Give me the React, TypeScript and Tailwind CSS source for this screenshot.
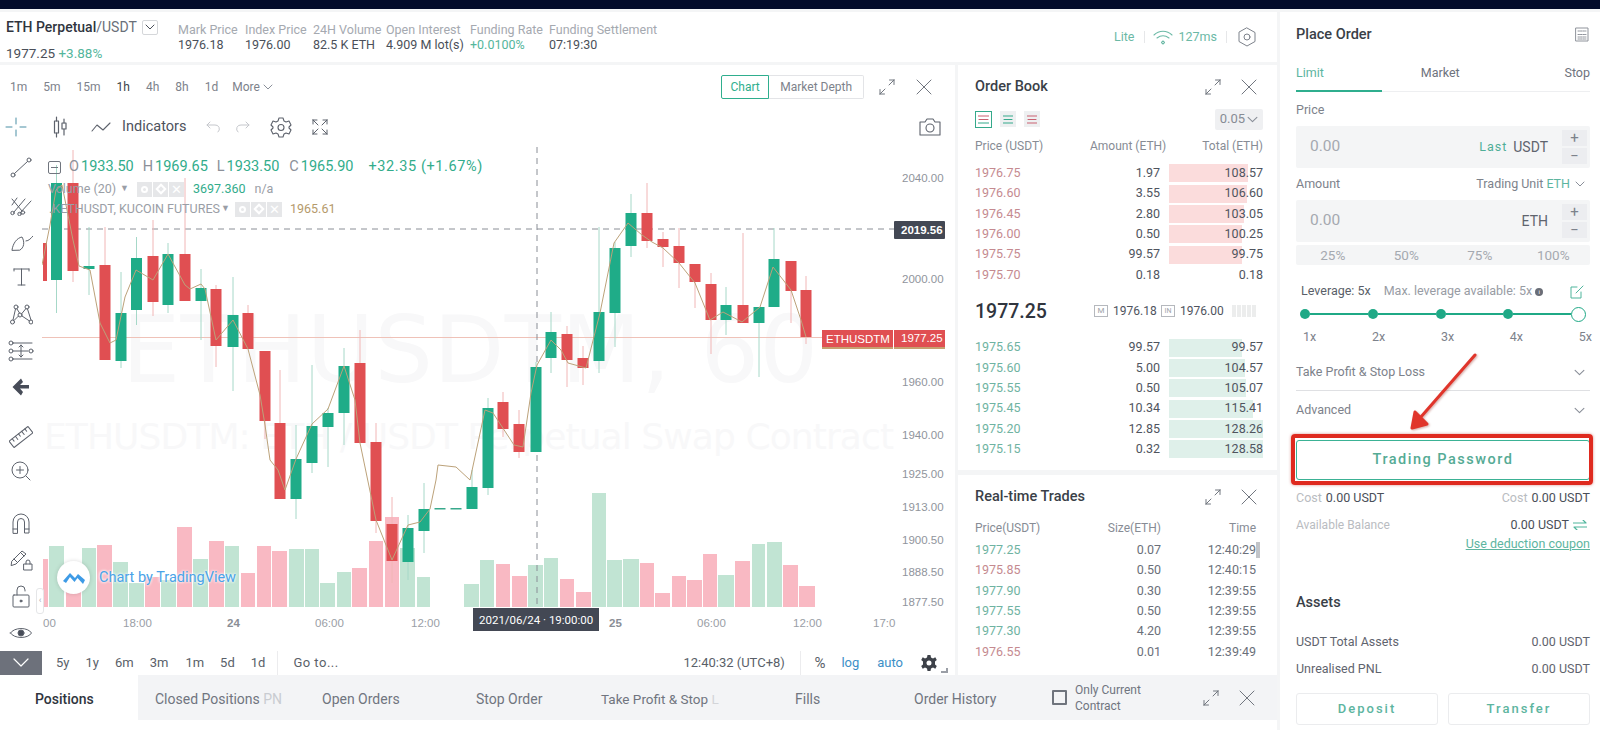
import React from "react";

type C = [number, number, number, number, number, "g" | "r"];
const candles: C[] = [
  [45, 243, 281, 243, 281, "r"], [56.5, 183, 280, 165, 313, "g"], [73, 183, 271, 150, 282, "r"], [89, 266, 269, 227, 295, "g"],
  [105, 265, 360, 227, 360, "r"], [121, 313, 361, 272, 368, "g"], [136.5, 258, 310, 237, 325, "g"], [153, 256, 302, 220, 316, "r"],
  [168, 254, 305, 243, 313, "g"], [185, 254, 301, 178, 301, "r"], [201, 288, 301, 269, 340, "g"], [216, 289, 346, 285, 367, "r"],
  [233, 315, 347, 277, 391, "g"], [248, 313, 349, 305, 349, "r"], [265, 351, 421, 351, 439, "r"], [280, 423, 499, 370, 499, "r"],
  [296, 459, 499, 425, 519, "g"], [312, 426, 463, 365, 473, "g"], [328, 413, 427, 408, 467, "g"], [344, 366, 413, 348, 445, "g"],
  [360, 363, 443, 330, 443, "r"], [376, 442, 521, 423, 533, "r"], [392, 524, 561, 497, 583, "r"], [408, 528, 562, 515, 580, "g"],
  [424, 509, 531, 483, 553, "g"], [472, 487, 509, 470, 509, "g"], [488, 408, 488, 398, 495, "g"], [503, 402, 429, 392, 437, "r"],
  [519, 424, 452, 410, 458, "r"], [536, 367, 452, 362, 452, "g"], [551, 332, 358, 312, 373, "g"], [567, 334, 360, 326, 387, "r"],
  [583, 358, 368, 346, 385, "r"], [599, 312, 361, 227, 373, "g"], [615, 248, 313, 242, 347, "g"], [631, 213, 246, 194, 257, "g"],
  [647, 213, 241, 183, 248, "r"], [663, 239, 247, 232, 267, "r"], [679, 246, 263, 228, 288, "r"], [695, 264, 282, 264, 308, "r"],
  [711, 284, 320, 273, 354, "r"], [726, 305, 320, 287, 335, "g"], [743, 305, 323, 233, 323, "r"], [759, 307, 323, 307, 377, "g"],
  [774, 259, 307, 228, 307, "g"], [791, 261, 291, 261, 323, "r"], [806, 290, 337, 276, 344, "r"],
];
const flat: number[] = [440, 456];
type V = [number, number, number, "g" | "r"];
const vols: V[] = [
  [43, 48, 559, "r"], [49, 64, 546, "g"], [66, 81, 570, "r"], [82, 96, 548, "g"], [97, 112, 545, "r"], [113, 128, 562, "g"], [129, 144, 583, "g"], [145, 160, 577, "r"],
  [161, 176, 580, "g"], [177, 192, 527, "r"], [193, 208, 559, "g"], [209, 224, 541, "r"], [225, 239, 546, "g"], [241, 255, 573, "r"], [257, 271, 546, "r"], [272, 287, 551, "r"],
  [289, 304, 549, "g"], [305, 319, 549, "g"], [320, 335, 583, "g"], [337, 351, 572, "g"], [352, 367, 568, "r"], [369, 383, 541, "r"], [385, 399, 517, "r"], [400, 415, 548, "g"],
  [417, 430, 577, "g"], [464, 479, 584, "g"], [480, 494, 560, "g"], [496, 510, 564, "r"], [512, 527, 576, "r"], [528, 543, 565, "g"], [544, 558, 558, "g"], [560, 574, 579, "r"],
  [576, 591, 592, "r"], [592, 606, 493, "g"], [607, 622, 560, "g"], [623, 639, 559, "g"], [640, 654, 563, "r"], [655, 670, 593, "r"], [672, 686, 576, "r"], [687, 702, 580, "r"],
  [703, 717, 554, "r"], [718, 734, 575, "g"], [735, 750, 561, "r"], [752, 765, 544, "g"], [767, 782, 542, "g"], [783, 798, 565, "r"], [799, 815, 586, "r"],
];
const line =
  "42,265 50,225 56,190 62,185 73,240 79,266 90,270 100,323 110,343 116,340 125,297 136,270 153,280 168,254 185,285 190,289 201,284 205,289 216,340 233,320 248,349 260,395 265,425 270,460 278,470 285,490 296,459 312,424 328,409 344,366 355,400 360,443 376,520 392,560 408,525 420,522 430,509 436,480 438,465 456,467 470,480 485,410 493,413 514,445 523,447 531,393 537,365 551,340 561,350 568,363 586,368 600,313 614,243 628,223 642,235 652,242 663,248 679,263 695,283 710,320 723,312 742,322 760,307 773,267 791,290 801,320 806,337";

const asks = [["1976.75", "1.97", "108.57"], ["1976.60", "3.55", "106.60"], ["1976.45", "2.80", "103.05"], ["1976.00", "0.50", "100.25"], ["1975.75", "99.57", "99.75"], ["1975.70", "0.18", "0.18"]];
const bids = [["1975.65", "99.57", "99.57"], ["1975.60", "5.00", "104.57"], ["1975.55", "0.50", "105.07"], ["1975.45", "10.34", "115.41"], ["1975.20", "12.85", "128.26"], ["1975.15", "0.32", "128.58"]];
const trades: [string, string, string, boolean][] = [
  ["1977.25", "0.07", "12:40:29", true], ["1975.85", "0.50", "12:40:15", false], ["1977.90", "0.30", "12:39:55", true],
  ["1977.55", "0.50", "12:39:55", true], ["1977.30", "4.20", "12:39:55", true], ["1976.55", "0.01", "12:39:49", false],
];

const S = ({ w = 24, h = 24, vb, children, c = "#5d626c", sw = 1 }: { w?: number; h?: number; vb?: string; children: React.ReactNode; c?: string; sw?: number }) => (
  <svg width={w} height={h} viewBox={vb ?? `0 0 ${w} ${h}`} fill="none" stroke={c} strokeWidth={sw} strokeLinecap="round" strokeLinejoin="round">
    {children}
  </svg>
);
const Expand = ({ c = "#71767f" }: { c?: string }) => (
  <S w={18} h={18} c={c} sw={1}>
    <path d="M2 16 7 11M2 16V11.5M2 16H6.5M16 2 11 7M16 2V6.5M16 2H11.5" />
  </S>
);
const Close = () => (
  <S w={16} h={16} c="#71767f" sw={1}>
    <path d="M1 1 15 15M15 1 1 15" />
  </S>
);
const Chev = ({ c = "#8a8f99", s = 10 }: { c?: string; s?: number }) => (
  <S w={s} h={s} vb="0 0 10 10" c={c} sw={1}>
    <path d="M1 3 5 7 9 3" />
  </S>
);
const GearBox = () => (
  <span className="flex items-center gap-[1px]">
    <span className="flex h-[15px] w-[15px] items-center justify-center bg-[#e6e7e9]"><span className="h-[7px] w-[7px] rounded-full border-2 border-white" /></span>
    <span className="flex h-[15px] w-[15px] items-center justify-center bg-[#e6e7e9]"><span className="h-[8px] w-[8px] rotate-45 border-2 border-white" /></span>
    <span className="flex h-[15px] w-[15px] items-center justify-center bg-[#e6e7e9] text-[13px] leading-none text-white">✕</span>
  </span>
);

const tools: React.ReactNode[] = [
  <S key="a"><circle cx="20" cy="5" r="2" /><circle cx="4" cy="20" r="2" /><path d="M5.500 18.500 18.500 6.500" /></S>,
  <S key="b"><path d="M3 7 13 19" /><path d="M5 20 16 7M3 13 8 6M11 21 22 9" /><circle cx="3.500" cy="21" r="1.700" /><circle cx="10.500" cy="22" r="1.700" /><circle cx="14" cy="20.500" r="1.700" /></S>,
  <S key="c"><path d="M3 21C4 14 8 9 13 8 16 13 15 19 11 21Z" /><path d="M17 12C20 12 22 9 24 7" /></S>,
  <S key="d"><path d="M5 4H20M12.500 4V20M9 20H16M5 4V6M20 4V6" /></S>,
  <S key="e"><circle cx="7" cy="5" r="2" /><circle cx="18" cy="5" r="2" /><circle cx="3.500" cy="20" r="2" /><circle cx="11" cy="13" r="2" /><circle cx="22" cy="20" r="2" /><path d="M6.500 7 4 18M8 7 10.500 11M12.500 12 17 6.500M18.500 7 22 18M13 14 20.500 19M9.500 14 5 18.500" /></S>,
  <S key="f" w={26} h={24}><path d="M5 4H24M5 20H24M6 12H20" /><circle cx="3" cy="4" r="2" /><circle cx="3" cy="12" r="2" /><circle cx="3" cy="20" r="2" /><circle cx="23" cy="12" r="2" /><path d="M13 6V18M11 8 13 6 15 8M11 16 13 18 15 16" /></S>,
  <svg key="g" width="20" height="20" viewBox="0 0 20 20" fill="#474c58"><path d="M10 1.500 1.500 10 10 18.500 12 15 9 11.500H18V8H9L12 5Z" /></svg>,
];
const tools2: React.ReactNode[] = [
  <S key="a"><g transform="rotate(-38 12 12)"><rect x="0" y="8" width="24" height="8" rx="0.500" /><path d="M4 8V11M8 8V12M12 8V11M16 8V12M20 8V11" /></g></S>,
  <S key="b"><circle cx="11" cy="11" r="8" /><path d="M11 7.500V14.500M7.500 11H14.500M17 17 21 21" /></S>,
];
const tools3: React.ReactNode[] = [
  <S key="a"><path d="M4 22V11A8 8 0 0 1 20 11V22H15.500V11A3.500 3.500 0 0 0 8.500 11V22ZM4 18H8.500M15.500 18H20" /></S>,
  <S key="b"><path d="M3 14 13 4 17 7 7 17 2.500 18.500ZM12 6 15 9M5 12 8 15" /><rect x="15" y="17" width="8" height="6" /><path d="M17 17V15A2 2 0 0 1 21 15V17" /></S>,
  <S key="c"><rect x="4" y="11" width="16" height="12" rx="1" /><path d="M8 11V6A4 4 0 0 1 16 6V7" /><circle cx="12" cy="17" r="1" fill="#5d626c" /></S>,
  <S key="d"><path d="M1.500 12C5 6 19 6 22.500 12 19 18 5 18 1.500 12Z" /><circle cx="12" cy="12" r="3" fill="#474c58" /></S>,
];

function Chart() {
  return (
    <div className="relative h-[507px] w-[913px]">
      <svg className="block" width="913" height="507" viewBox="42 144 913 507" fontFamily="'Liberation Sans',sans-serif">
        <text x="122" y="382" fontSize="92" fill="#f8f8f9" fontFamily="'DejaVu Sans',sans-serif" textLength="696">ETHUSDTM, 60</text>
        <text x="44" y="449" fontSize="36" fill="#f8f8f9" fontFamily="'DejaVu Sans',sans-serif" textLength="850">ETHUSDTM: ETH / USDT Perpetual Swap Contract</text>
        {vols.map((v, i) => (
          <rect key={i} x={v[0]} y={v[2]} width={v[1] - v[0]} height={607 - v[2]} fill={v[3] === "g" ? "#c1e4d3" : "#f9b9c3"} />
        ))}
        <line x1="42" x2="894" y1="229" y2="229" stroke="#8a8e96" strokeDasharray="6 5" />
        <line x1="42" x2="822" y1="337.500" y2="337.500" stroke="#efc2b8" />
        <line x1="537" x2="537" y1="147" y2="608" stroke="#8a8e96" strokeDasharray="6 5" />
        {candles.map((c, i) => {
          const up = c[5] === "g";
          return (
            <g key={i}>
              <line x1={c[0]} x2={c[0]} y1={c[3]} y2={c[4]} stroke={up ? "#a6d8c8" : "#f1b6b6"} />
              <rect x={i === 0 ? 43 : c[0] - 5.5} y={c[1]} width={i === 0 ? 4 : 11} height={c[2] - c[1]} fill={up ? "#1fac88" : "#e04f52"} />
            </g>
          );
        })}
        {flat.map((x) => (
          <rect key={x} x={x - 5.5} y="508" width="11" height="1.500" fill="#38a98c" />
        ))}
        <polyline points={line} fill="none" stroke="#bca27a" strokeWidth="1" />
        <rect x="822" y="330" width="71" height="19" fill="#e04f52" />
        <rect x="822" y="347" width="71" height="2" fill="#c7a070" />
        <rect x="894" y="330" width="51" height="19" fill="#e04f52" />
        <rect x="894" y="347" width="51" height="2" fill="#c7a070" />
        <text x="826" y="343" fontSize="11.500" fill="#fff">ETHUSDTM</text>
        <text x="901" y="342" fontSize="11.500" fill="#fff">1977.25</text>
        <rect x="894" y="221" width="51" height="18" fill="#434854" rx="1" />
        <text x="901" y="234" fontSize="11.500" fill="#fff" fontWeight="700">2019.56</text>
        {[["2040.00", 182], ["2000.00", 283], ["1960.00", 386], ["1940.00", 439], ["1925.00", 478], ["1913.00", 511], ["1900.50", 544], ["1888.50", 576], ["1877.50", 606]].map(([t, y]) => (
          <text key={String(t)} x="902" y={Number(y)} fontSize="11.500" fill="#90949c">{t}</text>
        ))}
        {[["00", 43], ["18:00", 123], ["06:00", 315], ["12:00", 411], ["06:00", 697], ["12:00", 793], ["17:0", 873]].map(([t, x], i) => (
          <text key={i} x={Number(x)} y="627" fontSize="11.500" fill="#9a9ea6">{t}</text>
        ))}
        <text x="227" y="627" fontSize="11.500" fill="#8a8e96" fontWeight="700">24</text>
        <text x="609" y="627" fontSize="11.500" fill="#8a8e96" fontWeight="700">25</text>
        <rect x="473" y="608" width="126" height="23" fill="#434854" />
        <text x="479" y="624" fontSize="11.500" fill="#fff" fontFamily="Roboto,sans-serif">2021/06/24 · 19:00:00</text>
      </svg>

      <div className="absolute left-[6px] top-[15px] flex h-[16px] items-center text-[14.500px] text-[#32ac8b]">
        <span className="mr-[8px] flex h-[13px] w-[13px] items-center justify-center rounded-[2px] border border-[#70757e]"><span className="h-px w-[7px] bg-[#70757e]" /></span>
        <span className="text-[#8c9099]">O</span><span className="ml-[2px]">1933.50</span>
        <span className="ml-[9px] text-[#8c9099]">H</span><span className="ml-[2px]">1969.65</span>
        <span className="ml-[9px] text-[#8c9099]">L</span><span className="ml-[2px]">1933.50</span>
        <span className="ml-[10px] text-[#8c9099]">C</span><span className="ml-[2px]">1965.90</span>
        <span className="ml-[15px] tracking-[0.6px]">+32.35 (+1.67%)</span>
      </div>
      <div className="absolute left-[6px] top-[37px] flex h-[16px] items-center text-[12.500px] text-[#9a9ea6]">
        <span className="w-[72px]">Volume (20)</span>
        <span className="w-[17px] text-[9px]">▼</span>
        <GearBox />
        <span className="ml-[9px] text-[#32ac8b]">3697.360</span>
        <span className="ml-[9px]">n/a</span>
      </div>
      <div className="absolute left-[7px] top-[57px] flex h-[16px] items-center text-[12.500px] text-[#9a9ea6]">
        <span className="w-[172px] whitespace-nowrap">.KETHUSDT, KUCOIN FUTURES</span>
        <span className="w-[14px] text-[9px]">▼</span>
        <GearBox />
        <span className="ml-[8px] text-[#b59a6b]">1965.61</span>
      </div>
      <div className="absolute left-[15px] top-[417px] flex items-center">
        <span className="flex h-[33px] w-[33px] items-center justify-center rounded-full bg-white shadow-[0_0_4px_rgba(0,0,0,0.15)]">
          <svg width="24" height="14" viewBox="0 0 24 14" fill="#3e9be6"><path d="M1 10 8 2 13 7 16 3 23 9 21 13 15.500 7 12.500 11 8 6 4 12Z" /></svg>
        </span>
        <span className="ml-[9px] text-[14.500px] text-[#4aa3e8] [text-shadow:0_0_3px_#fff,0_0_3px_#fff]">Chart by TradingView</span>
      </div>
      <span className="absolute left-[-6px] top-[444px] flex h-[26px] w-[8px] items-center justify-center rounded-[3px] border border-[#e5e6e8] bg-white text-[9px] text-[#a8acb3]">‹</span>
    </div>
  );
}

function ChartPanel() {
  return (
    <div className="flex w-[955px] flex-col bg-white">
      <div className="flex h-[43px] items-center whitespace-nowrap text-[12px] text-[#7d828b]">
        <span className="ml-[10px] mt-[1px]">1m</span>
        <span className="ml-[16px] mt-[1px]">5m</span>
        <span className="ml-[16px] mt-[1px]">15m</span>
        <span className="ml-[16px] mt-[1px] text-[#3a3f48]">1h</span>
        <span className="ml-[16px] mt-[1px]">4h</span>
        <span className="ml-[16px] mt-[1px]">8h</span>
        <span className="ml-[16px] mt-[1px]">1d</span>
        <span className="ml-[14px] mt-[1px] flex w-[44px] items-center gap-[3px]">More <Chev /></span>
        <div className="ml-[445px] flex h-[24px] items-center">
          <span className="flex h-full w-[48px] items-center justify-center rounded-l-[2px] border border-[#2fae8e] text-[#2fae8e]">Chart</span>
          <span className="flex h-full w-[95px] items-center justify-center rounded-r-[2px] border border-l-0 border-[#e3e4e7]">Market Depth</span>
        </div>
        <span className="ml-[14px]"><Expand /></span>
        <span className="ml-[20px]"><Close /></span>
      </div>
      <div className="flex h-[36px] items-center pt-[2px]">
        <span className="ml-[4px] w-[24px]">
          <S c="#4b8fa5"><path d="M12 3V9M12 15V21M2 12H8M16 12H22" /></S>
        </span>
        <span className="ml-[25px]">
          <S w={16} h={22} sw={1.2}><rect x="1.500" y="5" width="4" height="12" /><path d="M3.500 1V5M3.500 17V21M11 3V7M11 13V19" /><rect x="9" y="7" width="4" height="6" /></S>
        </span>
        <span className="ml-[22px]"><S w={20} h={14} sw={1.1}><path d="M1 11 6 5 12 10 19 3" /></S></span>
        <span className="ml-[11px] w-[64px] whitespace-nowrap text-[14.500px] text-[#4d525c]">Indicators</span>
        <span className="ml-[20px]"><S w={14} h={14} c="#c5c7cc"><path d="M4 2 1 5 4 8M1 5H9A4 4 0 0 1 12 12" /></S></span>
        <span className="ml-[16px]"><S w={14} h={14} c="#c5c7cc"><path d="M10 2 13 5 10 8M13 5H5A4 4 0 0 0 2 12" /></S></span>
        <span className="ml-[20px]">
          <S w={22} h={22} sw={1.1}><path d="M9 2H13L14 5 16 6 19 5 21 9 19 11V12L21 14 19 18 16 17 14 18 13 21H9L8 18 6 17 3 18 1 14 3 12V11L1 9 3 5 6 6 8 5Z" /><circle cx="11" cy="11.500" r="3" /></S>
        </span>
        <span className="ml-[19px]">
          <S w={18} h={18} sw={1}><path d="M7 7 2 2M2 2V6M2 2H6M11 7 16 2M16 2V6M16 2H12M7 11 2 16M2 16V12M2 16H6M11 11 16 16M16 16V12M16 16H12" /></S>
        </span>
        <span className="ml-[590px]">
          <S w={22} h={20} sw={1.1}><path d="M1 5H6L8 2H14L16 5H21V18H1Z" /><circle cx="11" cy="11" r="4" /></S>
        </span>
      </div>
      <div className="flex h-[507px]">
        <div className="flex w-[42px] flex-col items-center pt-[5px]">
          {tools.map((t, i) => (
            <span key={i} className="flex h-[37px] items-center">{t}</span>
          ))}
          <span className="h-[14px]" />
          {tools2.map((t, i) => (
            <span key={i} className="flex h-[35px] items-center">{t}</span>
          ))}
          <span className="h-[16px]" />
          {tools3.map((t, i) => (
            <span key={i} className="flex h-[37px] items-center">{t}</span>
          ))}
        </div>
        <Chart />
      </div>
      <div className="flex h-[24px] items-center whitespace-nowrap text-[13px] text-[#5a5f69]">
        <span className="flex h-full w-[42px] items-center justify-center bg-[#6d717b]">
          <S w={18} h={10} c="#fff" sw={1.2}><path d="M2 1 9 8 16 1" /></S>
        </span>
        <span className="ml-[14px]">5y</span>
        <span className="ml-[16px]">1y</span>
        <span className="ml-[16px]">6m</span>
        <span className="ml-[16px]">3m</span>
        <span className="ml-[17px]">1m</span>
        <span className="ml-[16px]">5d</span>
        <span className="ml-[16px]">1d</span>
        <span className="ml-[12px] h-[24px] w-px bg-[#ececee]" />
        <span className="ml-[15px] w-[46px] tracking-[0.5px]">Go to...</span>
        <span className="ml-[344px] w-[104px]">12:40:32 (UTC+8)</span>
        <span className="ml-[13px] h-[24px] w-px bg-[#ececee]" />
        <span className="ml-[13px] text-[15px]">%</span>
        <span className="ml-[16px] text-[#3d8fc7]">log</span>
        <span className="ml-[18px] text-[#3d8fc7]">auto</span>
        <span className="ml-[18px]">
          <svg width="16" height="16" viewBox="0 0 16 16" fill="#3d4149"><path d="M6.500 0H9.500L10 2.500 12 3.500 14.300 2.300 15.800 5 14 6.600V9.400L15.800 11 14.300 13.700 12 12.500 10 13.500 9.500 16H6.500L6 13.500 4 12.500 1.700 13.700.2 11 2 9.400V6.600L.2 5 1.700 2.300 4 3.500 6 2.500ZM8 5.500A2.500 2.500 0 1 0 8 10.500 2.500 2.500 0 0 0 8 5.500Z" /></svg>
        </span>
        <span className="ml-[4px] mt-[14px] h-[5px] w-[7px] border-b-2 border-r-2 border-[#9a9ea6]" />
      </div>
    </div>
  );
}

function OrderBook() {
  const Row = ({ r, red }: { r: string[]; red: boolean }) => (
    <div className="flex h-[20.400px] items-center text-[12.500px]">
      <span className={`w-[115px] ${red ? "text-[#c58a90]" : "text-[#6fb3a2]"}`}>{r[0]}</span>
      <span className="w-[70px] text-right text-[#4f545e]">{r[1]}</span>
      <span className="relative ml-[9px] flex h-[18px] w-[94px] items-center justify-end text-[#4f545e]">
        {Number(r[2]) > 1 && (
          <span className={`absolute left-0 top-0 h-full ${red ? "bg-[#fbdcdc]" : "bg-[#dff0ea]"}`} style={{ width: (Number(r[2]) / 128.58) * 94 }} />
        )}
        <span className="relative">{r[2]}</span>
      </span>
    </div>
  );
  return (
    <div className="h-[405px] bg-white pl-[17px] pr-[14px]">
      <div className="flex h-[42px] items-center pt-[1px]">
        <span className="text-[14.500px] font-medium text-[#3a3f48]">Order Book</span>
        <span className="ml-auto"><Expand /></span>
        <span className="ml-[19px] mr-[6px]"><Close /></span>
      </div>
      <div className="flex h-[24px] items-center">
        <span className="flex h-[17px] w-[17px] items-center justify-center border border-[#35a98b]"><S w={11} h={9} c="#c96070" sw={1}><path d="M0 1H11M1 4.500H10" /><path d="M0 8H11" stroke="#35a98b" /></S></span>
        <span className="ml-[8px] flex h-[16px] w-[16px] items-center justify-center bg-[#eef0f1]"><S w={10} h={9} c="#35a98b" sw={1}><path d="M0 1H10M1 4.500H9M0 8H10" /></S></span>
        <span className="ml-[8px] flex h-[16px] w-[16px] items-center justify-center bg-[#eef0f1]"><S w={10} h={9} c="#c96070" sw={1}><path d="M0 1H10M1 4.500H9M0 8H10" /></S></span>
        <span className="ml-auto flex h-[21px] w-[48px] items-center justify-center gap-[2px] rounded-[2px] bg-[#eff0f2] text-[13px] text-[#878c95]">0.05 <Chev s={11} /></span>
      </div>
      <div className="flex h-[30px] items-center whitespace-nowrap text-[12px] text-[#878c95]">
        <span className="w-[115px]">Price (USDT)</span>
        <span className="w-[75px] text-right">Amount (ETH)</span>
        <span className="ml-[4px] w-[94px] text-right">Total (ETH)</span>
      </div>
      <div className="mt-[2px]">
        {asks.map((r) => <Row key={r[0]} r={r} red />)}
      </div>
      <div className="flex h-[52px] items-center">
        <span className="w-[119px] text-[19.500px] font-medium text-[#30353e]">1977.25</span>
        <span className="flex h-[12px] w-[14px] items-center justify-center border border-[#b5b8bd] text-[8px] text-[#9ea2a9]">M</span>
        <span className="ml-[5px] w-[42px] text-[12px] text-[#4f545e]">1976.18</span>
        <span className="ml-[6px] flex h-[12px] w-[14px] items-center justify-center border border-[#b5b8bd] text-[7px] text-[#9ea2a9]">IN</span>
        <span className="ml-[5px] w-[42px] text-[12px] text-[#4f545e]">1976.00</span>
        <span className="ml-[10px] flex gap-[1px]">
          {[0, 1, 2, 3, 4].map((i) => <span key={i} className="h-[12px] w-[4px] bg-[#eceded]" />)}
        </span>
      </div>
      <div>
        {bids.map((r) => <Row key={r[0]} r={r} red={false} />)}
      </div>
    </div>
  );
}

function Trades() {
  return (
    <div className="mt-[5px] h-[200px] bg-white pl-[17px] pr-[14px]">
      <div className="flex h-[43px] items-center pt-[1px]">
        <span className="text-[14.500px] font-medium text-[#3a3f48]">Real-time Trades</span>
        <span className="ml-auto"><Expand /></span>
        <span className="ml-[19px] mr-[6px]"><Close /></span>
      </div>
      <div className="flex h-[19px] items-center whitespace-nowrap text-[12px] text-[#878c95]">
        <span className="w-[130px]">Price(USDT)</span>
        <span className="w-[56px] text-right">Size(ETH)</span>
        <span className="w-[95px] text-right">Time</span>
      </div>
      <div className="relative mt-[3px]">
        {trades.map((t, i) => (
          <div key={i} className="flex h-[20.400px] items-center text-[12.500px] text-[#6b707a]">
            <span className={`w-[130px] ${t[3] ? "text-[#6fb3a2]" : "text-[#c58a90]"}`}>{t[0]}</span>
            <span className="w-[56px] text-right">{t[1]}</span>
            <span className="w-[95px] text-right">{t[2]}</span>
          </div>
        ))}
        <span className="absolute left-[281px] top-[2px] h-[16px] w-[4px] bg-[#c2c4c8]" />
      </div>
    </div>
  );
}

function Tabs() {
  return (
    <div className="flex h-[45px] items-center whitespace-nowrap bg-[#f3f4f6] text-[14px] text-[#70757f]">
      <span className="flex h-full w-[138px] items-center bg-white pl-[35px] pt-[3px] font-medium text-[#30353e]">Positions</span>
      <span className="ml-[17px] mt-[3px] w-[125px]">Closed Positions <span className="text-[#c9ccd1]">PN</span></span>
      <span className="ml-[42px] mt-[3px] w-[90px]">Open Orders</span>
      <span className="ml-[64px] mt-[3px] w-[68px]">Stop Order</span>
      <span className="ml-[57px] mt-[3px] w-[125px] text-[13.500px]">Take Profit &amp; Stop <span className="text-[#d3d5d9]">L</span></span>
      <span className="ml-[69px] mt-[3px] w-[26px]">Fills</span>
      <span className="ml-[93px] mt-[3px] w-[88px]">Order History</span>
      <span className="ml-[50px] h-[15px] w-[15px] rounded-[1px] border-2 border-[#6f747d]" />
      <span className="ml-[8px] w-[80px] whitespace-normal text-[12px] leading-[16px]">Only Current Contract</span>
      <span className="ml-[47px]"><Expand /></span>
      <span className="ml-[19px]"><Close /></span>
    </div>
  );
}

function Stepper() {
  return (
    <span className="ml-[14px] flex w-[25px] flex-col gap-[2px] text-[#7d828b]">
      <span className="flex h-[16px] items-center justify-center bg-[#ecedf0] text-[15px]">+</span>
      <span className="flex h-[16px] items-center justify-center bg-[#ecedf0] text-[15px]">−</span>
    </span>
  );
}

function PlaceOrder() {
  return (
    <div className="relative h-[718px] w-[320px] bg-white pl-[16px] pr-[10px] text-[12px] text-[#7d828b]">
      <div className="flex h-[45px] items-center">
        <span className="text-[14.500px] font-medium text-[#3a3f48]">Place Order</span>
        <span className="ml-auto mr-[1px]">
          <S w={14} h={15} c="#8f939b" sw={1}><rect x="1" y="1" width="12" height="13" /><path d="M3 4H11M3 7.500H11M3 10H11M3 12H11" strokeDasharray="1.500 1" /></S>
        </span>
      </div>
      <div className="relative flex h-[35px] items-center justify-between border-b border-[#eeeff1] pb-[2px] text-[12.500px]">
        <span className="text-[#5db59f]">Limit</span>
        <span className="-ml-[8px] text-[#6e737d]">Market</span>
        <span className="text-[#6e737d]">Stop</span>
        <span className="absolute bottom-[-1px] left-0 h-[2px] w-[86px] bg-[#2fae8e]" />
      </div>
      <div className="flex h-[34px] items-center pt-[2px] text-[12.500px]">Price</div>
      <div className="flex h-[42px] items-center rounded-[2px] bg-[#f4f5f6] pl-[14px] pr-[3px]">
        <span className="text-[15.500px] text-[#a5a9b0]">0.00</span>
        <span className="ml-auto text-[12.500px] tracking-[1px] text-[#4fae97]">Last</span>
        <span className="ml-[6px] text-[14px] text-[#5f646e]">USDT</span>
        <Stepper />
      </div>
      <div className="flex h-[32px] items-center text-[12.500px]">
        <span>Amount</span>
        <span className="ml-auto">Trading Unit</span>
        <span className="ml-[3px] text-[#5db59f]">ETH</span>
        <span className="ml-[5px] mr-[5px]"><Chev /></span>
      </div>
      <div className="flex h-[42px] items-center rounded-[2px] bg-[#f4f5f6] pl-[14px] pr-[3px]">
        <span className="text-[15.500px] text-[#a5a9b0]">0.00</span>
        <span className="ml-auto text-[14px] text-[#5f646e]">ETH</span>
        <Stepper />
      </div>
      <div className="mt-[3px] grid h-[20px] grid-cols-4 items-center rounded-[2px] bg-[#f4f5f6] text-center text-[13.500px] text-[#a5a9b0]">
        <span>25%</span><span>50%</span><span>75%</span><span>100%</span>
      </div>
      <div className="mt-[14px] flex h-[25px] items-center whitespace-nowrap pl-[5px]">
        <span className="text-[12.500px] text-[#5a5f69]">Leverage: 5x</span>
        <span className="ml-[13px] text-[12.500px] text-[#989ca4]">Max. leverage available: 5x</span>
        <span className="ml-[3px] flex h-[8px] w-[8px] items-center justify-center rounded-full bg-[#6a6e77] text-[6px] text-white">i</span>
        <span className="ml-auto mr-[6px]">
          <S w={14} h={14} c="#4fb59c" sw={1}><path d="M11 7V13H1V2H7M6 8 13 1" /></S>
        </span>
      </div>
      <div className="mx-[4px] flex h-[20px] items-center justify-between">
        {[0, 1, 2, 3].map((i) => (
          <React.Fragment key={i}>
            <span className="h-[10px] w-[10px] shrink-0 rounded-full bg-[#1fa986]" />
            <span className="h-[2px] flex-1 bg-[#1fa986]" />
          </React.Fragment>
        ))}
        <span className="h-[15px] w-[15px] shrink-0 rounded-full border border-[#1fa986] bg-white" />
      </div>
      <div className="mt-[3px] flex h-[20px] items-center justify-between pl-[7px] text-[12.500px]">
        <span>1x</span><span>2x</span><span>3x</span><span>4x</span><span className="-mr-[2px]">5x</span>
      </div>
      <div className="mt-[8px] flex h-[36px] items-center justify-between border-b border-[#dfe0e3] pr-[5px] text-[12.500px]">
        <span>Take Profit &amp; Stop Loss</span><Chev s={11} />
      </div>
      <div className="flex h-[38px] items-center justify-between pr-[5px] text-[12.500px]">
        <span>Advanced</span><Chev s={11} />
      </div>
      <div className="relative mt-[11px] flex h-[40px] items-center justify-center rounded-[3px] border border-[#3bb295] text-[14.500px] font-medium tracking-[1.500px] text-[#55ab95]">
        Trading Password
        <span className="absolute bottom-[-6px] left-[-6px] right-[-4px] top-[-7px] rounded-[4px] border-[4px] border-[#df2a1f] shadow-[0_0_3px_rgba(180,30,20,0.5)]" />
      </div>
      <div className="mt-[5px] flex h-[26px] items-center text-[12.500px]">
        <span className="text-[#b9bcc1]">Cost</span>
        <span className="ml-[4px] text-[#4a4f59]">0.00 USDT</span>
        <span className="ml-auto text-[#b9bcc1]">Cost</span>
        <span className="ml-[4px] text-[#4a4f59]">0.00 USDT</span>
      </div>
      <div className="mt-[1px] flex h-[26px] items-center">
        <span className="text-[12px] text-[#b9bcc1]">Available Balance</span>
        <span className="ml-auto text-[12.500px] text-[#4a4f59]">0.00 USDT</span>
        <span className="ml-[4px] mr-[3px]"><S w={14} h={10} c="#4fb59c" sw={1.2}><path d="M0 3H13L10 0M14 7H1L4 10" /></S></span>
      </div>
      <div className="-mt-[4px] flex h-[20px] items-center justify-end text-[12.500px] text-[#5db59f] underline">Use deduction coupon</div>
      <div className="mt-[37px] flex h-[24px] items-center text-[14.500px] font-medium text-[#3a3f48]">Assets</div>
      <div className="mt-[15px] flex h-[24px] items-center text-[12.500px] text-[#5f646e]">
        <span>USDT Total Assets</span><span className="ml-auto">0.00 USDT</span>
      </div>
      <div className="mt-[3px] flex h-[24px] items-center text-[12.500px] text-[#5f646e]">
        <span>Unrealised PNL</span><span className="ml-auto">0.00 USDT</span>
      </div>
      <div className="mt-[12px] flex gap-[10px] text-[13px] font-medium tracking-[2px] text-[#5db59f]">
        <span className="flex h-[32px] flex-1 items-center justify-center rounded-[3px] border border-[#ebecee]">Deposit</span>
        <span className="flex h-[32px] flex-1 items-center justify-center rounded-[3px] border border-[#ebecee]">Transfer</span>
      </div>
      <svg className="absolute left-[125px] top-[340px] drop-shadow-[1px_1px_1px_rgba(150,40,30,0.4)]" width="75" height="85" viewBox="0 0 75 85" fill="none" stroke="#e0352b" strokeWidth="3" strokeLinecap="round" strokeLinejoin="round">
        <path d="M70 3 8 74" />
        <path d="M7 76 10 60 22 72Z" fill="#e0352b" />
      </svg>
    </div>
  );
}

export default function App() {
  return (
    <div className="h-[730px] w-[1600px] overflow-hidden bg-[#f4f5f6] font-['Roboto','Noto_Sans',sans-serif]">
      <div className="h-[9px] bg-[#020b2a]" />
      <div className="mt-[3px] flex h-[718px] items-start">
        <div className="w-[1277px]">
          <div className="flex h-[50px] items-center bg-white pl-[6px] pr-[21px] text-[12.500px]">
            <div className="mt-[6px] w-[172px]">
              <div className="flex items-center text-[14px]">
                <span className="font-medium text-[#30353e]">ETH Perpetual</span>
                <span className="text-[#6a6f79]">/USDT</span>
                <span className="ml-[5px] flex h-[15px] w-[16px] items-center justify-center rounded-[2px] border border-[#d5d7da]"><Chev c="#4a4f59" /></span>
              </div>
              <div className="mt-[5px] text-[13.500px] text-[#4a4f59]">1977.25 <span className="text-[#54b69c]">+3.88%</span></div>
            </div>
            {[["Mark Price", "1976.18", "w-[67px]"], ["Index Price", "1976.00", "w-[68px]"], ["24H Volume", "82.5 K ETH", "w-[73px]"], ["Open Interest", "4.909 M lot(s)", "w-[84px]"], ["Funding Rate", "+0.0100%", "w-[79px]"], ["Funding Settlement", "07:19:30", "w-[120px]"]].map(([a, b, w]) => (
              <div key={a} className={`${w} whitespace-nowrap leading-[15px]`}>
                <div className="text-[#a5a9b0]">{a}</div>
                <div className={b.startsWith("+") ? "text-[#54b69c]" : "text-[#4a4f59]"}>{b}</div>
              </div>
            ))}
            <span className="ml-auto text-[#6bb9a6]">Lite</span>
            <span className="ml-[9px] h-[12px] w-px bg-[#e6e7e9]" />
            <span className="ml-[8px]"><S w={20} h={15} c="#6bb9a6" sw={1.1}><path d="M1 5C6 0 14 0 19 5M4 8C8 5 12 5 16 8M8.500 12.500 10 14 11.500 12.500 10 11Z" /></S></span>
            <span className="ml-[6px] text-[#6bb9a6]">127ms</span>
            <span className="ml-[9px] h-[12px] w-px bg-[#e6e7e9]" />
            <span className="ml-[11px]"><S w={18} h={20} c="#7d828b" sw={1}><path d="M9 1 17 5.500V14.500L9 19 1 14.500V5.500Z" /><circle cx="9" cy="10" r="3" /></S></span>
          </div>
          <div className="mt-[3px] flex h-[610px] gap-[3px]">
            <ChartPanel />
            <div className="w-[319px]">
              <OrderBook />
              <Trades />
            </div>
          </div>
          <Tabs />
          <div className="h-[10px] bg-white" />
        </div>
        <div className="ml-[3px] h-[718px]">
          <PlaceOrder />
        </div>
      </div>
    </div>
  );
}
